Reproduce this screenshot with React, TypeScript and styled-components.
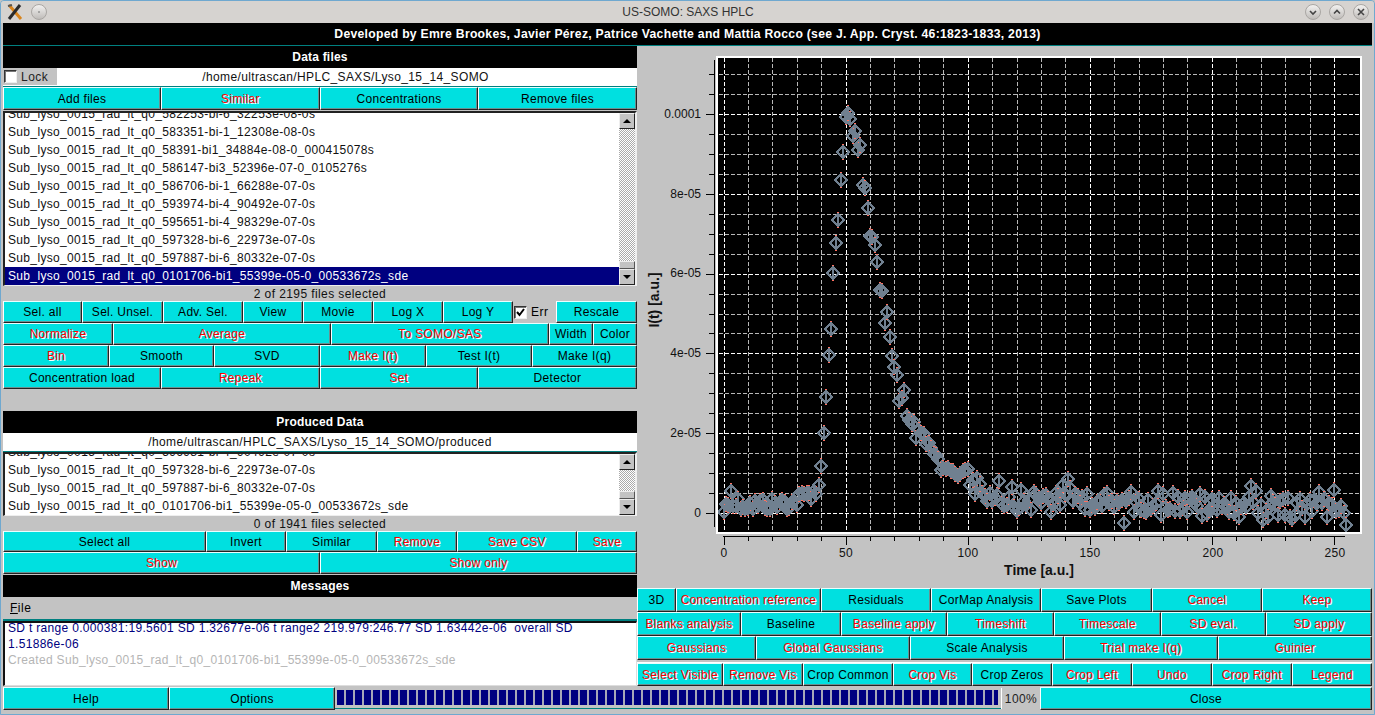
import React from "react";
import styled, { createGlobalStyle } from "styled-components";

const Global = createGlobalStyle`
  html, body { margin: 0; padding: 0; background: #c3c3c3; overflow: hidden; }
  * { box-sizing: border-box; }
`;

const FONT = `"Liberation Sans", Arial, sans-serif`;

const Window = styled.div`
  width: 1375px; height: 715px; display: flex; flex-direction: column;
  background: #c3c3c3; font-family: ${FONT}; font-size: 12px; color: #000;
  border: 1px solid #6fa8cf; border-radius: 4px 4px 0 0; overflow: hidden;
`;
const TitleBar = styled.div`
  height: 22px; flex: none; display: flex; align-items: center; padding: 0 3px 0 4px; gap: 4px;
  background: #d6d3d0; color: #333; font-size: 12px;
`;
const TitleText = styled.div`flex: 1; text-align: center; padding-left: 24px;`;
const TitleIcon = styled.svg`width: 20px; height: 20px; flex: none;`;
const Body = styled.div`
  flex: 1; min-height: 0; display: flex; flex-direction: column; padding: 0 2px 4px 2px;
  background: #c3c3c3;
`;
const Banner = styled.div`
  height: 23px; flex: none; background: #000; color: #fff; font-weight: 700; font-size: 12.2px;
  letter-spacing: 0.275px; display: flex; align-items: center; justify-content: center;
  border-bottom: 1px solid #008080;
`;
const Columns = styled.div`flex: 1; min-height: 0; display: flex;`;
const LeftCol = styled.div`width: 634px; flex: none; display: flex; flex-direction: column;`;
const RightCol = styled.div`flex: 1; min-width: 0; display: flex; flex-direction: column;`;
const Header = styled.div`
  height: 22px; flex: none; background: #000; color: #fff; font-weight: 700; font-size: 12px;
  display: flex; align-items: center; justify-content: center; letter-spacing: 0.2px;
`;
const PathRow = styled.div`
  height: 19px; flex: none; display: flex; background: #fff; border-bottom: 1px solid #008080; padding-bottom: 1px;
`;
const LockBox = styled.label`
  width: 54px; flex: none; background: #c3c3c3; display: flex; align-items: center; gap: 4px; padding-left: 1px;
  letter-spacing: 0.5px; color: #222;
`;
const Check = styled.span`
  width: 13px; height: 13px; flex: none; background: #fff; border: 1px solid; border-color: #333 #eee #eee #333;
  box-shadow: inset 1px 1px 0 #777; display: inline-flex; align-items: center; justify-content: center;
`;
const PathText = styled.div<{ $inset?: number }>`
  flex: 1; text-align: center; letter-spacing: 0.38px; line-height: 18px; color: #111;
  padding-right: ${(p) => p.$inset ?? 0}px;
`;
const Row = styled.div<{ $h: number }>`
  height: ${(p) => p.$h}px; flex: none; display: flex; width: 100%;
`;
const Btn = styled.div<{ $w: number; $red?: boolean }>`
  width: ${(p) => p.$w}px; flex: none; height: 100%; background: #00e0e0; display: flex; align-items: center;
  justify-content: center; white-space: nowrap; letter-spacing: 0.3px; overflow: hidden;
  border: 1px solid; border-color: #e8ffff #222 #222 #fff; box-shadow: inset -1px -1px 0 #6a8f8f;
  color: ${(p) => (p.$red ? "#ff0000" : "#000")};
  text-shadow: ${(p) => (p.$red ? "1px 1px 0 #fff" : "none")};
`;
const ListFrame = styled.div<{ $h: number; $gap: number }>`
  height: ${(p) => p.$h}px; flex: none; display: flex; background: #fff; margin-top: ${(p) => p.$gap}px;
  border-style: solid; border-width: 2px 2px 1px 2px;
  border-color: #222 #eee #eee #222; overflow: hidden;
`;
const ListBody = styled.div`
  flex: 1; min-width: 0; display: flex; flex-direction: column; justify-content: flex-end; overflow: hidden;
`;
const ListItem = styled.div<{ $sel?: boolean }>`
  height: 18px; flex: none; line-height: 18px; padding-left: 3px; letter-spacing: 0.34px; white-space: nowrap;
  color: ${(p) => (p.$sel ? "#fff" : "#111")}; background: ${(p) => (p.$sel ? "#000080" : "transparent")};
`;
const Scrollbar = styled.div`
  width: 16px; flex: none; display: flex; flex-direction: column;
`;
const ScrollBtn = styled.div`
  height: 16px; flex: none; background: #c3c3c3; display: flex; align-items: center; justify-content: center;
  border: 1px solid; border-color: #eee #222 #222 #eee;
`;
const ScrollThumb = styled.div<{ $h: number }>`
  height: ${(p) => p.$h}px; flex: none; background: #c3c3c3; border: 1px solid; border-color: #eee #555 #555 #eee;
`;
const Trough = styled.div`
  flex: 1; min-height: 0;
  background-color: #fff;
  background-image: conic-gradient(#aaa 25%, #fff 25% 50%, #aaa 50% 75%, #fff 75%);
  background-size: 2px 2px;
`;
const Arrow = styled.span<{ $up?: boolean }>`
  width: 0; height: 0; border-left: 4px solid transparent; border-right: 4px solid transparent;
  ${(p) => (p.$up ? "border-bottom: 4px solid #000;" : "border-top: 4px solid #000;")}
`;
const Status = styled.div<{ $h: number }>`
  height: ${(p) => p.$h}px; flex: none; display: flex; align-items: center; justify-content: center;
  letter-spacing: 0.4px; color: #111;
`;
const Spacer = styled.div<{ $h: number }>`height: ${(p) => p.$h}px; flex: none;`;
const ErrBox = styled.label`
  width: 43px; flex: none; display: flex; align-items: center; gap: 4px; padding-left: 1px; letter-spacing: 0.5px;
`;
const MenuBar = styled.div`
  height: 24px; flex: none; display: flex; align-items: center; padding-left: 7px; letter-spacing: 0.5px;
  border-bottom: 2px solid #008080;
`;
const Ul = styled.span`text-decoration: underline;`;
const MsgBox = styled.div`
  height: 65px; flex: none; background: #fff; border: 1px solid; border-color: #111 #ddd #ddd #111;
  border-width: 2px 1px 1px 2px; padding: 0 3px; overflow: hidden;
  letter-spacing: 0.32px; line-height: 16px;
`;
const MsgScroll = styled.div`margin-top: -3px; display: flex; flex-direction: column;`;
const MsgLine = styled.div<{ $grey?: boolean }>`
  color: ${(p) => (p.$grey ? "#b5b5b5" : "#000080")}; white-space: pre;
`;
const PlotPanel = styled.div`height: 542px; flex: none; padding: 0;`;
const PlotSvg = styled.svg`display: block; width: 735px; height: 542px;`;
const RowGap = styled.div`height: 3px; flex: none; border-bottom: 1px solid #fff;`;
const BottomRow = styled.div`height: 23px; flex: none; display: flex; margin-top: 1px; width: 100%;`;
const Progress = styled.div`
  width: 666px; flex: none; height: 21px; margin-top: 1px; padding: 2px 3px 3px 2px; border-bottom: 1px solid #008080;
  background: #c3c3c3;
`;
const ProgressFill = styled.div`
  height: 100%;
  background: repeating-linear-gradient(90deg, #000080 0 7px, #a8a8b8 7px 9px);
`;
const Pct = styled.div`
  width: 39px; flex: none; height: 21px; margin-top: 1px; display: flex; align-items: center; justify-content: center;
  border-left: 1px solid #fff; letter-spacing: 0.4px; color: #222;
`;

const Up = () => (
  <ScrollBtn><Arrow $up /></ScrollBtn>
);
const Down = () => (
  <ScrollBtn><Arrow /></ScrollBtn>
);

const Tick = () => (
  <svg width="11" height="11" viewBox="0 0 11 11">
    <path d="M2 5 L4.5 8 L9 2" fill="none" stroke="#000" strokeWidth="2" />
  </svg>
);

const RoundBtn = ({ d }: { d?: string }) => (
  <TitleIcon viewBox="0 0 20 20">
    <defs>
      <linearGradient id="rb" x1="0" y1="0" x2="0" y2="1">
        <stop offset="0" stopColor="#f4f3f2" />
        <stop offset="1" stopColor="#bdbab7" />
      </linearGradient>
    </defs>
    <circle cx="10" cy="10" r="7.5" fill="url(#rb)" stroke="#a9a6a3" />
    {d ? <path d={d} fill="none" stroke="#444" strokeWidth="1.6" /> : <circle cx="10" cy="10" r="0.8" fill="#666" />}
  </TitleIcon>
);

type B = [string, number, boolean?];

const rowsFiles: B[] = [["Add files", 158], ["Similar", 159, true], ["Concentrations", 158], ["Remove files", 159]];
const rowSel1: B[] = [["Sel. all", 79], ["Sel. Unsel.", 81], ["Adv. Sel.", 80], ["View", 60], ["Movie", 70], ["Log X", 70], ["Log Y", 70]];
const rowSel2: B[] = [["Normalize", 110, true], ["Average", 218, true], ["To SOMO/SAS", 218, true], ["Width", 44], ["Color", 44]];
const rowSel3: B[] = [["Bin", 106, true], ["Smooth", 105], ["SVD", 106], ["Make I(t)", 106, true], ["Test I(t)", 106], ["Make I(q)", 105]];
const rowSel4: B[] = [["Concentration load", 158], ["Repeak", 159, true], ["Set", 158, true], ["Detector", 159]];
const rowProd1: B[] = [["Select all", 203], ["Invert", 80], ["Similar", 91], ["Remove", 80, true], ["Save CSV", 120, true], ["Save", 60, true]];
const rowProd2: B[] = [["Show", 317, true], ["Show only", 317, true]];
const rowR1: B[] = [["3D", 39], ["Concentration reference", 145, true], ["Residuals", 110], ["CorMap Analysis", 110], ["Save Plots", 111], ["Cancel", 110, true], ["Keep", 110, true]];
const rowR2: B[] = [["Blanks analysis", 104, true], ["Baseline", 100], ["Baseline apply", 106, true], ["Timeshift", 107, true], ["Timescale", 107, true], ["SD eval.", 105, true], ["SD apply", 106, true]];
const rowR3: B[] = [["Gaussians", 119, true], ["Global Gaussians", 154, true], ["Scale Analysis", 154], ["Trial make I(q)", 154, true], ["Guinier", 154, true]];
const rowR4: B[] = [["Select Visible", 86, true], ["Remove Vis", 80, true], ["Crop Common", 90], ["Crop Vis", 79, true], ["Crop Zeros", 80], ["Crop Left", 80, true], ["Undo", 80, true], ["Crop Right", 80, true], ["Legend", 80, true]];

const Buttons = ({ items }: { items: B[] }) => (
  <>
    {items.map(([t, w, r], i) => (
      <Btn key={i} $w={w} $red={r}>{t}</Btn>
    ))}
  </>
);

const P = "Sub_lyso_0015_rad_lt_q0_";
const files = [
  "582253-bi-6_32253e-08-0s", "583351-bi-1_12308e-08-0s", "58391-bi1_34884e-08-0_000415078s",
  "586147-bi3_52396e-07-0_0105276s", "586706-bi-1_66288e-07-0s", "593974-bi-4_90492e-07-0s",
  "595651-bi-4_98329e-07-0s", "597328-bi-6_22973e-07-0s", "597887-bi-6_80332e-07-0s",
];
const SEL = "0101706-bi1_55399e-05-0_00533672s_sde";

// --- plot data -------------------------------------------------------------
const X0 = 723.5, PXU = 2.442;
const peak: number[] = [466, 433, 397, 355, 329, 273, 243, 220, 180, 152, 117, 113, 119, 136, 131, 150, 145, 185, 188, 208, 236, 237, 245, 262, 290, 291, 323, 312, 337, 356, 367, 375, 401, 398, 390, 416, 420, 424, 422, 438, 430];
const knots: [number, number][] = [[81, 430], [85, 452], [88, 460], [90, 472], [95, 474], [99, 470], [102, 482], [106, 492], [115, 497], [150, 500], [190, 504], [235, 506], [255, 510]];
const baseKnots: [number, number][] = [[0, 510], [2, 503], [12, 505], [28, 503], [36, 492], [39, 489]];
const lerp = (k: [number, number][], i: number) => {
  for (let j = 1; j < k.length; j++) {
    if (i <= k[j][0]) {
      const [a, b] = k[j - 1];
      const [c, d] = k[j];
      return b + ((d - b) * (i - a)) / (c - a);
    }
  }
  return k[k.length - 1][1];
};
const points: [number, number][] = (() => {
  let s = 12345;
  const rnd = () => { s = (s * 1103515245 + 12345) & 0x7fffffff; return s / 0x7fffffff; };
  const out: [number, number][] = [];
  for (let i = 0; i <= 255; i++) {
    let y: number;
    if (i < 40) y = lerp(baseKnots, i) + (rnd() - 0.5) * 14;
    else if (i <= 80) y = peak[i - 40];
    else {
      const r = rnd();
      const spread = i < 100 ? 9 : 22;
      y = lerp(knots, i) + (rnd() - 0.5) * spread + (i > 100 ? Math.sin(i / 6) * 3 : 0);
      if (i > 100 && r < 0.1) y -= 9;
      else if (i > 100 && r > 0.9) y += 10;
    }
    if (i === 3) y = 491;
    if (i === 255) y = 525;
    out.push([Math.round(X0 + PXU * i), Math.round(y)]);
  }
  return out;
})();

const PlotArea = () => {
  const hs: number[] = [];
  for (let k = -4; k <= 23; k++) hs.push(k);
  const vs: number[] = [];
  for (let k = 0; k <= 25; k++) vs.push(k);
  const gy = (k: number) => Math.round(513 - k * 19.95);
  const gx = (k: number) => Math.round(X0 + k * 24.42);
  return (
    <PlotSvg viewBox="637 46 735 542" shapeRendering="crispEdges">
      <rect x="716" y="56" width="645" height="477" fill="#000" />
      {hs.filter((k) => gy(k) > 58 && gy(k) < 531).map((k) => (
        <line key={k} x1="719" x2="1359" y1={gy(k) + 0.5} y2={gy(k) + 0.5}
          stroke={k % 4 === 0 ? "#fff" : "#b8b8b8"} strokeDasharray="4 2" />
      ))}
      {vs.map((k) => (
        <line key={k} x1={gx(k) + 0.5} x2={gx(k) + 0.5} y1="58" y2="531"
          stroke={k % 5 === 0 ? "#fff" : "#b8b8b8"} strokeDasharray="4 2" />
      ))}
      {points.map(([x, y], i) => (
        <g key={i} fill="none">
          <rect x={x - 1} y={y - 8} width="2" height="16" fill="#ff7060" />
          <path d={`M${x} ${y - 6} L${x + 6} ${y} L${x} ${y + 6} L${x - 6} ${y} Z`} stroke="#708090" strokeWidth="2" />
          <rect x={x - 1} y={y - 6} width="2" height="12" fill="#708090" />
        </g>
      ))}
      <rect x="716" y="56" width="646" height="2" fill="#fff" />
      <rect x="716" y="56" width="2" height="478" fill="#fff" />
      <rect x="716" y="532" width="646" height="2" fill="#fff" />
      <rect x="1360" y="56" width="2" height="478" fill="#fff" />

      <g stroke="#000" fill="none">
        <line x1="714.5" x2="714.5" y1="60" y2="527" />
        {hs.filter((k) => gy(k) > 60 && gy(k) < 527).map((k) => (
          <line key={k} y1={gy(k) + 0.5} y2={gy(k) + 0.5} x1={k % 4 === 0 ? 706 : 709} x2="714" />
        ))}
        <line x1="723" x2="1345" y1="536.5" y2="536.5" />
        {vs.map((k) => (
          <line key={k} x1={gx(k) + 0.5} x2={gx(k) + 0.5} y1="537" y2={k % 5 === 0 ? 545 : 541} />
        ))}
      </g>
      <g fontFamily={FONT} fontSize="12" fill="#111" textAnchor="end" shapeRendering="auto">
        <text x="701" y="118">0.0001</text>
        <text x="701" y="198">8e-05</text>
        <text x="701" y="277">6e-05</text>
        <text x="701" y="357">4e-05</text>
        <text x="701" y="437">2e-05</text>
        <text x="701" y="517">0</text>
      </g>
      <g fontFamily={FONT} fontSize="12" fill="#111" letterSpacing="0.3" textAnchor="middle" shapeRendering="auto">
        <text x="724" y="557">0</text>
        <text x="846" y="557">50</text>
        <text x="968" y="557">100</text>
        <text x="1090" y="557">150</text>
        <text x="1213" y="557">200</text>
        <text x="1335" y="557">250</text>
      </g>
      <text x="1039" y="575" fontFamily={FONT} fontSize="14" fontWeight="700" textAnchor="middle" fill="#111">Time [a.u.]</text>
      <text transform="translate(659 300) rotate(-90)" fontFamily={FONT} fontSize="14" fontWeight="700" textAnchor="middle" fill="#111">I(t) [a.u.]</text>
    </PlotSvg>
  );
};

export default function App() {
  return (
    <>
      <Global />
      <Window>
        <TitleBar>
          <TitleIcon viewBox="0 0 20 20">
            <path d="M4 3 L16 17" stroke="#d8841c" strokeWidth="3" />
            <path d="M15 3 L4 17" stroke="#2a2a2a" strokeWidth="3" />
            <path d="M3 4 L7 3" stroke="#555" strokeWidth="2" />
          </TitleIcon>
          <RoundBtn />
          <TitleText>US-SOMO: SAXS HPLC</TitleText>
          <RoundBtn d="M7 9 L10 12 L13 9" />
          <RoundBtn d="M7 11.5 L10 8.5 L13 11.5" />
          <RoundBtn d="M7 7 L13 13 M13 7 L7 13" />
        </TitleBar>
        <Body>
          <Banner>Developed by Emre Brookes, Javier Pérez, Patrice Vachette and Mattia Rocco (see J. App. Cryst. 46:1823-1833, 2013)</Banner>
          <Columns>
            <LeftCol>
              <Header>Data files</Header>
              <PathRow>
                <LockBox><Check />Lock</LockBox>
                <PathText $inset={3}>/home/ultrascan/HPLC_SAXS/Lyso_15_14_SOMO</PathText>
              </PathRow>
              <Row $h={23}><Buttons items={rowsFiles} /></Row>
              <ListFrame $h={175} $gap={1}>
                <ListBody>
                  {files.map((f) => <ListItem key={f}>{P + f}</ListItem>)}
                  <ListItem $sel>{P + SEL}</ListItem>
                </ListBody>
                <Scrollbar>
                  <Up />
                  <Trough />
                  <ScrollThumb $h={8} />
                  <Down />
                </Scrollbar>
              </ListFrame>
              <Status $h={15}>2 of 2195 files selected</Status>
              <Row $h={22}>
                <Buttons items={rowSel1} />
                <ErrBox><Check><Tick /></Check>Err</ErrBox>
                <Btn $w={81}>Rescale</Btn>
              </Row>
              <Row $h={22}><Buttons items={rowSel2} /></Row>
              <Row $h={22}><Buttons items={rowSel3} /></Row>
              <Row $h={22}><Buttons items={rowSel4} /></Row>
              <Spacer $h={22} />
              <Header>Produced Data</Header>
              <PathRow>
                <PathText>/home/ultrascan/HPLC_SAXS/Lyso_15_14_SOMO/produced</PathText>
              </PathRow>
              <ListFrame $h={64} $gap={0}>
                <ListBody>
                  <ListItem>{P + "596981-bi-4_90492e-07-0s"}</ListItem>
                  <ListItem>{P + "597328-bi-6_22973e-07-0s"}</ListItem>
                  <ListItem>{P + "597887-bi-6_80332e-07-0s"}</ListItem>
                  <ListItem>{P + SEL}</ListItem>
                </ListBody>
                <Scrollbar>
                  <Up />
                  <Trough />
                  <ScrollThumb $h={8} />
                  <Down />
                </Scrollbar>
              </ListFrame>
              <Status $h={15}>0 of 1941 files selected</Status>
              <Row $h={21}><Buttons items={rowProd1} /></Row>
              <Row $h={22}><Buttons items={rowProd2} /></Row>
              <Spacer $h={1} />
              <Header>Messages</Header>
              <MenuBar><span><Ul>F</Ul>ile</span></MenuBar>
              <MsgBox>
                <MsgScroll>
                  <MsgLine>SD t range 0.000381:19.5601 SD 1.32677e-06 t range2 219.979:246.77 SD 1.63442e-06  overall SD</MsgLine>
                  <MsgLine>1.51886e-06</MsgLine>
                  <MsgLine $grey>Created Sub_lyso_0015_rad_lt_q0_0101706-bi1_55399e-05-0_00533672s_sde</MsgLine>
                </MsgScroll>
              </MsgBox>
            </LeftCol>
            <RightCol>
              <PlotPanel><PlotArea /></PlotPanel>
              <Row $h={24}><Buttons items={rowR1} /></Row>
              <Row $h={24}><Buttons items={rowR2} /></Row>
              <Row $h={24}><Buttons items={rowR3} /></Row>
              <RowGap />
              <Row $h={23}><Buttons items={rowR4} /></Row>
            </RightCol>
          </Columns>
          <BottomRow>
            <Btn $w={166}>Help</Btn>
            <Btn $w={166}>Options</Btn>
            <Progress><ProgressFill /></Progress>
            <Pct>100%</Pct>
            <Btn $w={332}>Close</Btn>
          </BottomRow>
        </Body>
      </Window>
    </>
  );
}
